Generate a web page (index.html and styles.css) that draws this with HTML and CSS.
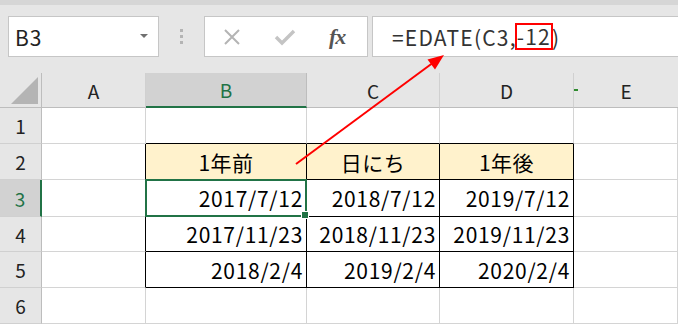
FILE: index.html
```html
<!DOCTYPE html>
<html lang="ja">
<head>
    <meta charset="UTF-8">
    <title>EDATE</title>
    <link rel="stylesheet" href="styles.css">
</head>
<body>
    <div class="toolbar">
        <div class="name-box">
            <span>B3</span>
            <span class="caret"></span>
        </div>
        <div class="grip"><i></i><i></i><i></i></div>
        <div class="fx-buttons">
            <svg class="btn" width="20" height="20" viewBox="0 0 20 20"><path d="M3 3 L17 17 M17 3 L3 17" stroke="#b4b4b4" stroke-width="2" fill="none"/></svg>
            <svg class="btn" width="22" height="20" viewBox="0 0 22 20"><path d="M2 10 L8 16 L20 4" stroke="#c4c4c4" stroke-width="3.4" fill="none"/></svg>
            <span class="fx">fx</span>
        </div>
        <div class="formula">=EDATE(C3,<span class="mark">-12</span>)</div>
    </div>

    <div class="sheet">
        <div class="corner"><div class="tri"></div></div>
        <div class="col-h">A</div>
        <div class="col-h active">B</div>
        <div class="col-h">C</div>
        <div class="col-h">D</div>
        <div class="col-h col-e">E</div>

        <div class="row-h">1</div>
        <div class="cell"></div>
        <div class="cell tb"></div>
        <div class="cell tb"></div>
        <div class="cell tb"></div>
        <div class="cell"></div>

        <div class="row-h">2</div>
        <div class="cell tr"></div>
        <div class="cell head">1年前</div>
        <div class="cell head">日にち</div>
        <div class="cell head">1年後</div>
        <div class="cell"></div>

        <div class="row-h active">3</div>
        <div class="cell tr"></div>
        <div class="cell num selected">2017/7/12</div>
        <div class="cell num">2018/7/12</div>
        <div class="cell num">2019/7/12</div>
        <div class="cell"></div>

        <div class="row-h">4</div>
        <div class="cell tr"></div>
        <div class="cell num">2017/11/23</div>
        <div class="cell num">2018/11/23</div>
        <div class="cell num">2019/11/23</div>
        <div class="cell"></div>

        <div class="row-h">5</div>
        <div class="cell tr"></div>
        <div class="cell num">2018/2/4</div>
        <div class="cell num">2019/2/4</div>
        <div class="cell num">2020/2/4</div>
        <div class="cell"></div>

        <div class="row-h">6</div>
        <div class="cell"></div>
        <div class="cell"></div>
        <div class="cell"></div>
        <div class="cell"></div>
        <div class="cell"></div>
    </div>

    <svg class="arrow" width="678" height="325" viewBox="0 0 678 325">
        <line x1="296" y1="164" x2="434" y2="62" stroke="#ff0000" stroke-width="2"/>
        <polygon points="444,55 435,69.5 427.5,59.5" fill="#ff0000"/>
    </svg>
</body>
</html>
```

FILE: styles.css
```css
* {
    box-sizing: border-box;
}
body {
    margin: 0;
    width: 678px;
    height: 325px;
    overflow: hidden;
    position: relative;
    background: #ffffff;
    font-family: "Noto Sans CJK JP", "Noto Sans", sans-serif;
    color: #000;
}
.toolbar {
    height: 73px;
    background: #e6e6e6;
    border-top: 5px solid #d6d6d6;
    padding-top: 11px;
    display: flex;
    align-items: flex-start;
}
.name-box {
    margin-left: 8px;
    width: 151px;
    height: 41px;
    background: #fff;
    border: 1px solid #c6c6c6;
    display: flex;
    align-items: center;
    justify-content: space-between;
    padding: 0 10px 0 6px;
    font-size: 21px;
    letter-spacing: 1px;
    color: #222;
}
.caret {
    width: 0;
    height: 0;
    border-left: 4px solid transparent;
    border-right: 4px solid transparent;
    border-top: 4px solid #707070;
    margin-top: -2px;
}
.grip {
    width: 45px;
    height: 41px;
    display: flex;
    flex-direction: column;
    align-items: center;
    justify-content: center;
    gap: 3px;
}
.grip i {
    width: 3px;
    height: 3px;
    background: #b4b4b4;
}
.fx-buttons {
    width: 164px;
    height: 41px;
    background: #fff;
    border: 1px solid #c6c6c6;
    display: flex;
    align-items: center;
    padding-left: 17px;
}
.fx-buttons .btn {
    margin-right: 32px;
}
.fx-buttons .btn + .btn {
    margin-right: 33px;
}
.fx {
    font-family: "Liberation Serif", serif;
    font-style: italic;
    font-weight: bold;
    font-size: 22px;
    color: #555;
    letter-spacing: -1px;
}
.formula {
    margin-left: 4px;
    flex: 1;
    height: 41px;
    background: #fff;
    border: 1px solid #c6c6c6;
    border-right: none;
    display: flex;
    align-items: center;
    padding-left: 19px;
    font-size: 21px;
    letter-spacing: 1.2px;
    color: #333;
}
.mark {
    border: 2px solid #ff0000;
    line-height: 23px;
    height: 27px;
    padding: 0;
    margin-left: -2px;
    margin-right: -1px;
}
.sheet {
    display: grid;
    grid-template-columns: 42px 104px 161px 133px 134px 104px;
    grid-template-rows: 35px 36px 36px 37px 35px 36px 36px;
}
.corner {
    background: #e6e6e6;
    border-right: 1px solid #bdbdbd;
    border-bottom: 1px solid #bdbdbd;
    position: relative;
}
.tri {
    position: absolute;
    right: 3px;
    bottom: 3px;
    width: 27px;
    height: 27px;
    background: #b4b4b4;
    clip-path: polygon(100% 0, 100% 100%, 0 100%);
}
.col-h {
    background: #e6e6e6;
    border-right: 1px solid #d0d0d0;
    border-bottom: 1px solid #bdbdbd;
    display: flex;
    align-items: center;
    justify-content: center;
    font-size: 19px;
    color: #222;
}
.col-h.active {
    background: #d2d2d2;
    color: #217346;
    border-bottom: 2px solid #217346;
    border-right-color: #bdbdbd;
}
.col-e {
    position: relative;
    border-right: none;
}
.col-e::before {
    content: "";
    position: absolute;
    left: 0;
    top: 16px;
    width: 4px;
    height: 2px;
    background: #2e8b2e;
}
.row-h {
    background: #e6e6e6;
    border-right: 1px solid #bdbdbd;
    border-bottom: 1px solid #d0d0d0;
    display: flex;
    align-items: center;
    justify-content: center;
    font-size: 19px;
    color: #222;
}
.row-h.active {
    background: #d2d2d2;
    color: #217346;
    border-right: 2px solid #217346;
}
.cell {
    border-right: 1px solid #d4d4d4;
    border-bottom: 1px solid #d4d4d4;
    display: flex;
    align-items: center;
    font-size: 21px;
    white-space: nowrap;
}
.cell.tb {
    border-bottom-color: #000;
}
.cell.tr {
    border-right-color: #000;
}
.cell.head {
    background: #fff2cc;
    border-right-color: #000;
    border-bottom-color: #000;
    justify-content: center;
    letter-spacing: 0.5px;
}
.cell.num {
    border-right-color: #000;
    border-bottom-color: #000;
    justify-content: flex-end;
    padding-right: 3px;
    letter-spacing: 0.7px;
}
.selected {
    position: relative;
}
.selected::after {
    content: "";
    position: absolute;
    top: -1px;
    left: -1px;
    right: -1px;
    bottom: -1px;
    border: 2px solid #217346;
}
.selected::before {
    content: "";
    position: absolute;
    right: -3px;
    bottom: -3px;
    width: 6px;
    height: 6px;
    background: #217346;
    border: 1px solid #fff;
    z-index: 1;
}
.arrow {
    position: absolute;
    left: 0;
    top: 0;
    pointer-events: none;
}
```
